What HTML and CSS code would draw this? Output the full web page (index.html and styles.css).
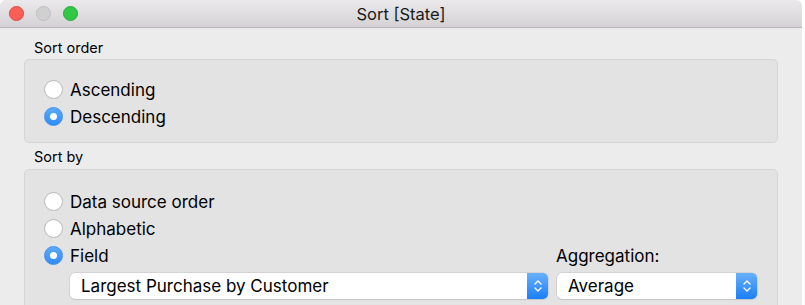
FILE: index.html
```html
<!DOCTYPE html>
<html>
<head>
<meta charset="utf-8">
<link rel="stylesheet" href="styles.css">
</head>
<body>
<div class="window">
  <div class="titlebar">
    <div class="lights">
      <span class="light red"></span>
      <span class="light gray"></span>
      <span class="light green"></span>
    </div>
    <div class="title">Sort [State]</div>
  </div>
  <div class="content">
    <div class="section-label">Sort order</div>
    <div class="group group-order">
      <div class="radio-row"><span class="radio"></span><span class="radio-text">Ascending</span></div>
      <div class="radio-row"><span class="radio on"></span><span class="radio-text">Descending</span></div>
    </div>
    <div class="section-label label-by">Sort by</div>
    <div class="group group-by">
      <div class="radio-row"><span class="radio"></span><span class="radio-text">Data source order</span></div>
      <div class="radio-row"><span class="radio"></span><span class="radio-text">Alphabetic</span></div>
      <div class="field-grid">
        <div class="radio-row"><span class="radio on"></span><span class="radio-text">Field</span></div>
        <div class="agg-label">Aggregation:</div>
        <div class="select select-field">
          <span class="select-text">Largest Purchase by Customer</span>
          <span class="stepper"><svg width="10" height="16" viewBox="0 0 10 16"><path d="M2 6 L5 3 L8 6 M2 10 L5 13 L8 10" fill="none" stroke="#fff" stroke-width="1.4" stroke-linecap="round" stroke-linejoin="round"/></svg></span>
        </div>
        <div class="select select-agg">
          <span class="select-text">Average</span>
          <span class="stepper"><svg width="10" height="16" viewBox="0 0 10 16"><path d="M2 6 L5 3 L8 6 M2 10 L5 13 L8 10" fill="none" stroke="#fff" stroke-width="1.4" stroke-linecap="round" stroke-linejoin="round"/></svg></span>
        </div>
      </div>
    </div>
  </div>
</div>
</body>
</html>
```
FILE: styles.css
```css
html, body {
  margin: 0;
  padding: 0;
  background: #ffffff;
  overflow: hidden;
}
body {
  font-family: "Inter", "Roboto", "Liberation Sans", sans-serif;
  color: #000;
}
.window {
  width: 802px;
  height: 305px;
  background: #ececec;
  border-top-left-radius: 6px;
  border-top-right-radius: 6px;
  overflow: hidden;
}
.titlebar {
  height: 27px;
  background: linear-gradient(#ebe9eb, #d4d2d4);
  border-bottom: 1px solid #b8b6b8;
  display: flex;
  align-items: center;
  position: relative;
}
.lights {
  display: flex;
  gap: 12px;
  padding-left: 9px;
}
.light {
  width: 15px;
  height: 15px;
  border-radius: 50%;
  box-sizing: border-box;
}
.light.red { background: #fc5f57; border: 1px solid #e2463f; }
.light.gray { background: #d1d0d1; border: 1px solid #bebdbe; }
.light.green { background: #33c748; border: 1px solid #27aa35; }
.title {
  position: absolute;
  left: 0;
  right: 0;
  top: 0;
  bottom: 0;
  display: flex;
  align-items: center;
  justify-content: center;
  font-size: 16.5px;
  color: #1a1a1a;
}
.content {
  padding: 0 24px;
}
.section-label {
  font-size: 14.5px;
  padding-left: 10px;
  height: 31px;
  line-height: 18px;
  padding-top: 11px;
  box-sizing: border-box;
}
.label-by {
  height: 26px;
  padding-top: 5px;
}
.group {
  background: #e3e3e3;
  border: 1px solid #d5d5d5;
  border-radius: 5px;
  box-sizing: border-box;
  padding-left: 19px;
  padding-right: 20px;
}
.group-order {
  height: 84px;
  padding-top: 16px;
}
.group-by {
  height: 160px;
  padding-top: 18px;
}
.radio-row {
  height: 27px;
  display: flex;
  align-items: center;
}
.radio {
  width: 19px;
  height: 19px;
  border-radius: 50%;
  background: #fff;
  border: 1px solid #b9b9b9;
  box-sizing: border-box;
  flex: none;
  position: relative;
}
.radio.on {
  background: linear-gradient(#5aaaf9, #2f8cf8);
  border-color: #3c90f0;
}
.radio.on::after {
  content: "";
  position: absolute;
  width: 7px;
  height: 7px;
  border-radius: 50%;
  background: #fff;
  left: 5px;
  top: 5px;
}
.radio-text {
  font-size: 17px;
  margin-left: 7px;
  color: #000;
}
.field-grid {
  display: grid;
  grid-template-columns: 1fr 200px;
  column-gap: 9px;
  row-gap: 4px;
}
.agg-label {
  font-size: 17px;
  margin-left: -1px;
  height: 27px;
  display: flex;
  align-items: center;
}
.select {
  height: 26px;
  background: #fff;
  border-radius: 5px;
  box-shadow: 0 0 0 0.5px #c4c4c4, 0 1px 1px rgba(0,0,0,0.12);
  display: flex;
  align-items: center;
  overflow: hidden;
}
.select-field {
  margin-left: 26px;
}
.select-text {
  flex: 1;
  font-size: 17px;
  padding-left: 11px;
  color: #000;
}
.stepper {
  width: 21px;
  height: 100%;
  background: linear-gradient(#68b0fb, #1b7ef8);
  display: flex;
  align-items: center;
  justify-content: center;
  flex: none;
}
```
